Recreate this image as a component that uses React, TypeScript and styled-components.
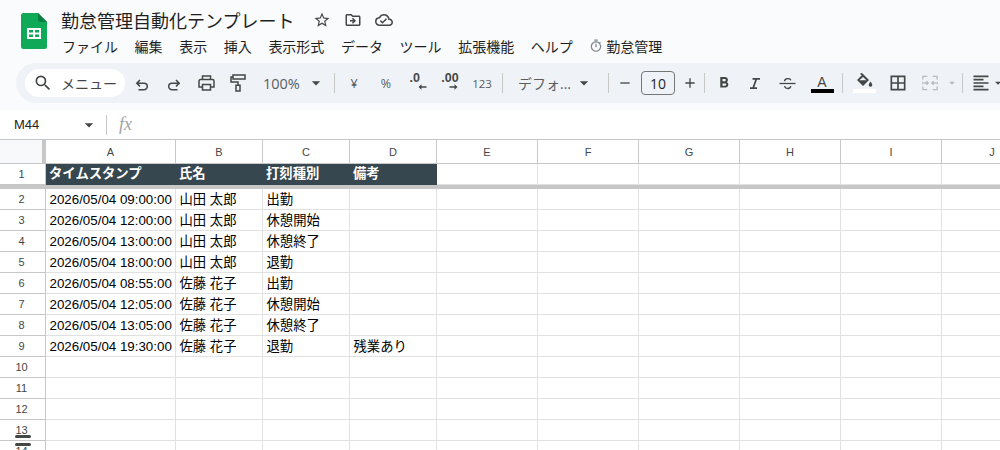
import React from 'react'
import styled, { createGlobalStyle } from 'styled-components'
import {
  MdStarBorder,
  MdOutlineDriveFileMove,
  MdOutlineCloudDone,
  MdFormatBold,
  MdBorderAll,
  MdFormatAlignLeft,
  MdSearch,
  MdArrowDropDown,
  MdRemove,
  MdAdd,
  MdOutlineTimer,
} from 'react-icons/md'

const CJK = `"Liberation Sans", "Noto Sans CJK JP", sans-serif`

const GlobalStyle = createGlobalStyle`
  html, body {
    margin: 0;
    padding: 0;
    width: 1000px;
    height: 450px;
    overflow: hidden;
    background: #fff;
  }
  * { box-sizing: border-box; }
`

const Page = styled.div`
  width: 1000px;
  height: 450px;
  overflow: hidden;
  position: relative;
  font-family: "Noto Sans CJK JP", sans-serif;
  color: #444746;
`

const TopArea = styled.div`
  height: 110px;
  background: #f9fbfd;
`

const TitleArea = styled.div`
  height: 63px;
  display: flex;
  padding-left: 21px;
`

const Logo = styled.svg`
  width: 26px;
  height: 36px;
  margin-top: 13px;
  flex: none;
`

const TitleColumn = styled.div`
  margin-left: 14px;
  display: flex;
  flex-direction: column;
`

const TitleRow = styled.div`
  height: 32px;
  padding-top: 7px;
  display: flex;
  align-items: center;
`

const DocTitle = styled.div`
  font-size: 18px;
  line-height: 26px;
  color: #1f1f1f;
  width: 245px;
`

const TitleIcon = styled.span`
  width: 31px;
  height: 24px;
  display: flex;
  align-items: center;
  justify-content: center;
  color: #444746;
  font-size: 18px;
  margin-top: 1px;
`

const MenuRow = styled.div`
  display: flex;
  align-items: center;
  gap: 16.6px;
  margin-left: 1px;
  height: 27px;
`

const MenuItem = styled.span`
  font-size: 14px;
  line-height: 20px;
  color: #1f1f1f;
  white-space: nowrap;
  display: flex;
  align-items: center;
  gap: 3px;
`

const Toolbar = styled.div`
  margin-left: 16px;
  width: 1000px;
  height: 40px;
  background: #eff3f8;
  border-radius: 20px 0 0 20px;
  padding-left: 9px;
  display: flex;
  align-items: center;
`

const SearchPill = styled.div`
  width: 100px;
  height: 28px;
  background: #fff;
  border-radius: 14px;
  display: flex;
  align-items: center;
  padding-left: 8px;
  flex: none;
  font-size: 14px;
  color: #444746;
  gap: 8px;
  margin-right: 1px;
  white-space: nowrap;
  svg { font-size: 20px; flex: none; }
`

const ToolButton = styled.div<{ $w?: number; $muted?: boolean }>`
  width: ${({ $w }) => $w ?? 32}px;
  height: 28px;
  flex: none;
  display: flex;
  align-items: center;
  justify-content: center;
  color: ${({ $muted }) => ($muted ? '#b8bbbf' : '#444746')};
  font-size: 20px;
  position: relative;
`

const ToolText = styled.span<{ $size?: number }>`
  font-family: "Open Sans", "Noto Sans CJK JP", sans-serif;
  font-size: ${({ $size }) => $size ?? 14}px;
  color: #5a5d5f;
  white-space: nowrap;
`

const Divider = styled.div<{ $ml?: number; $mr?: number }>`
  width: 1px;
  height: 20px;
  background: #c7c7c7;
  flex: none;
  margin-left: ${({ $ml }) => $ml ?? 0}px;
  margin-right: ${({ $mr }) => $mr ?? 0}px;
`

const ComboBlock = styled.div<{ $w: number }>`
  width: ${({ $w }) => $w}px;
  height: 28px;
  flex: none;
  display: flex;
  align-items: center;
  justify-content: space-between;
  padding-left: 9px;
  color: #444746;
  font-size: 20px;
`

const DecimalBox = styled.span`
  display: flex;
  flex-direction: column;
  align-items: flex-start;
  line-height: 10px;
  font-family: "Liberation Sans", sans-serif;
  font-weight: 700;
  font-size: 12.5px;
  color: #444746;
  margin-top: -3px;
  svg { display: block; margin-top: 1px; }
`

const SizeBox = styled.div`
  width: 34px;
  height: 24px;
  flex: none;
  border: 1px solid #747775;
  border-radius: 4px;
  display: flex;
  align-items: center;
  justify-content: center;
  font-family: "Open Sans", sans-serif;
  font-size: 14px;
  color: #1f1f1f;
`

const ColorStack = styled.div`
  display: flex;
  flex-direction: column;
  align-items: center;
  svg { display: block; }
`

const LetterA = styled.span`
  font-family: "Liberation Sans", sans-serif;
  font-size: 14px;
  line-height: 16px;
  color: #444746;
  transform: translateY(1px);
`

const ColorBar = styled.div<{ $color: string }>`
  width: 23px;
  height: 4px;
  background: ${({ $color }) => $color};
`

const FormulaBar = styled.div`
  height: 29px;
  background: #fff;
  display: flex;
  align-items: center;
  padding-left: 14px;
`

const NameBox = styled.div`
  width: 92px;
  display: flex;
  align-items: center;
  justify-content: space-between;
  padding-right: 7px;
  font-family: "Liberation Sans", sans-serif;
  font-size: 13px;
  color: #1f1f1f;
  svg { font-size: 20px; color: #444746; }
`

const FxMark = styled.span`
  font-family: "Liberation Serif", serif;
  font-style: italic;
  font-size: 18px;
  color: #a0a3a6;
  margin-left: 12px;
`

const SheetGrid = styled.div`
  display: grid;
  grid-template-columns: 46px 130px 87px 87px 87px 101px 101px 101px 101px 101px 101px;
  grid-template-rows: 24px 21px 4px repeat(13, 21px);
  border-top: 1px solid #c7c7c7;
  font-family: ${CJK};
`

const Corner = styled.div`
  background: #f8f9fa;
  border-right: 4px solid #c7c7c7;
  border-bottom: 1px solid #c7c7c7;
`

const ColHead = styled.div`
  border-right: 1px solid #c7c7c7;
  border-bottom: 1px solid #c7c7c7;
  display: flex;
  align-items: center;
  justify-content: center;
  font-size: 11px;
  color: #444746;
  padding-top: 1px;
`

const RowHead = styled.div`
  border-right: 1px solid #c7c7c7;
  border-bottom: 1px solid #c7c7c7;
  display: flex;
  align-items: center;
  justify-content: center;
  font-size: 11px;
  color: #444746;
  padding-right: 2px;
`

const Cell = styled.div<{ $head?: boolean }>`
  font-size: 13.33px;
  line-height: ${({ $head }) => ($head ? 20 : 22)}px;
  padding-left: ${({ $head }) => ($head ? 3 : 3.5)}px;
  padding-right: 1px;
  white-space: nowrap;
  overflow: hidden;
  color: ${({ $head }) => ($head ? '#fff' : '#000')};
  font-weight: ${({ $head }) => ($head ? 700 : 400)};
  background: ${({ $head }) => ($head ? '#37474f' : '#fff')};
  border-right: 1px solid ${({ $head }) => ($head ? '#37474f' : '#e1e1e1')};
  border-bottom: 1px solid ${({ $head }) => ($head ? '#37474f' : '#e1e1e1')};
`

const FreezeBar = styled.div`
  grid-column: 1 / -1;
  background: #c7c7c7;
`

const HiddenMark = styled.div<{ $top: number }>`
  position: absolute;
  left: 15px;
  top: ${({ $top }) => $top}px;
  width: 16px;
  height: 3px;
  border-radius: 2px;
  background: #444746;
`

const columns = ['A', 'B', 'C', 'D', 'E', 'F', 'G', 'H', 'I', 'J']

const rows = [
  ['2026/05/04 09:00:00', '山田 太郎', '出勤', ''],
  ['2026/05/04 12:00:00', '山田 太郎', '休憩開始', ''],
  ['2026/05/04 13:00:00', '山田 太郎', '休憩終了', ''],
  ['2026/05/04 18:00:00', '山田 太郎', '退勤', ''],
  ['2026/05/04 08:55:00', '佐藤 花子', '出勤', ''],
  ['2026/05/04 12:05:00', '佐藤 花子', '休憩開始', ''],
  ['2026/05/04 13:05:00', '佐藤 花子', '休憩終了', ''],
  ['2026/05/04 19:30:00', '佐藤 花子', '退勤', '残業あり'],
  ['', '', '', ''],
  ['', '', '', ''],
  ['', '', '', ''],
  ['', '', '', ''],
  ['', '', '', ''],
]

const headers = ['タイムスタンプ', '氏名', '打刻種別', '備考']

const menus = ['ファイル', '編集', '表示', '挿入', '表示形式', 'データ', 'ツール', '拡張機能', 'ヘルプ']

function SheetsLogo() {
  return (
    <Logo viewBox="0 0 26 36">
      <path d="M2.5 0H17l9 9v24.5a2.5 2.5 0 0 1-2.5 2.5h-21A2.5 2.5 0 0 1 0 33.500V2.500A2.500 2.500 0 0 1 2.500 0z" fill="#0fa958" />
      <path d="M17 0l9 9h-6.500A2.500 2.500 0 0 1 17 6.500z" fill="#0a7f43" />
      <path d="M6 15h14v11H6z M8 17v2.500h4V17z M14 17v2.500h4V17z M8 21.500V24h4v-2.500z M14 21.500V24h4v-2.500z" fill="#fff" fillRule="evenodd" />
    </Logo>
  )
}

function DecimalIcon({ label, dir }: { label: string; dir: 'left' | 'right' }) {
  return (
    <DecimalBox>
      {label}
      <svg width="9" height="6" viewBox="0 0 9 6" style={{ marginLeft: 8 }}>
        {dir === 'left' ? (
          <path d="M0.500 3L3.500 0.300V2.200H8.500V3.800H3.500V5.700z" fill="#444746" />
        ) : (
          <path d="M8.500 3L5.500 0.300V2.200H0.500V3.800H5.500V5.700z" fill="#444746" />
        )}
      </svg>
    </DecimalBox>
  )
}

function UndoIcon({ flip }: { flip?: boolean }) {
  return (
    <svg width="14" height="12" viewBox="0 0 14 12" fill="none" stroke="#444746" strokeWidth="1.500" style={{ transform: flip ? 'scaleX(-1)' : undefined, marginTop: 3 }}>
      <path d="M5 1L1.800 4.200L5 7.400M2 4.200H9a3.300 3.300 0 0 1 0 6.600H3.500" />
    </svg>
  )
}

function PrintIcon() {
  return (
    <svg width="17" height="16" viewBox="0 0 17 16" fill="none" stroke="#444746" strokeWidth="1.500">
      <path d="M4.500 4.500V1h8v3.500" />
      <path d="M4 12H1V6a1.500 1.500 0 0 1 1.500-1.500h12A1.500 1.500 0 0 1 16 6v6h-3" />
      <path d="M4.500 9.500h8V15h-8z" />
    </svg>
  )
}

function PaintIcon() {
  return (
    <svg width="16" height="18" viewBox="0 0 16 18" fill="none" stroke="#444746" strokeWidth="1.500">
      <path d="M3 1h12v4H3z" />
      <path d="M3 3H1V8H8V11" />
      <path d="M6 11.200h4v5.800H6z" />
    </svg>
  )
}

function ItalicIcon() {
  return (
    <svg width="10" height="11" viewBox="0 0 10 11">
      <path d="M2.500 0H10v1.800H7L4.300 9.200H7V11H0V9.200H2.500L5.200 1.800H2.500z" fill="#444746" />
    </svg>
  )
}

function StrikeIcon() {
  return (
    <svg width="17" height="13" viewBox="0 0 17 13" fill="none" stroke="#444746" strokeWidth="1.300">
      <path d="M0.500 6.500H16.500" />
      <path d="M5.500 4.300C5.500 1.200 11.500 0.600 11.700 3.400" />
      <path d="M5.600 9C6 12.300 11.700 12.300 11.700 9" />
    </svg>
  )
}

function FillIcon() {
  return (
    <svg width="17" height="15" viewBox="0 0 17 15" style={{ marginBottom: 1 }}>
      <path d="M4.500 0.500L6 0L8 2L13 7L7 13L1 7L5.800 2.300L4 0.900z" fill="#444746" />
      <path d="M7 4L10.500 7.200H3.300z" fill="#eff3f8" />
      <path d="M14.500 8.500C15.500 10 16.300 11 16.300 12A1.800 1.800 0 0 1 12.700 12C12.700 11 13.500 10 14.500 8.500z" fill="#444746" />
    </svg>
  )
}

function MergeIcon() {
  return (
    <svg width="16" height="16" viewBox="0 0 18 18" fill="none" stroke="#b8bbbf" strokeWidth="1.500">
      <path d="M1 5V1.500h5M12 1.500h5V5M1 13v3.500h5M12 16.500h5V13M1 7.500v3M17 7.500v3" />
      <path d="M2.500 9H7M5 7l2 2-2 2M15.500 9H11M13 7l-2 2 2 2" />
    </svg>
  )
}

export default function App() {
  return (
    <Page>
      <GlobalStyle />
      <TopArea>
        <TitleArea>
          <SheetsLogo />
          <TitleColumn>
            <TitleRow>
              <DocTitle>勤怠管理自動化テンプレート</DocTitle>
              <TitleIcon><MdStarBorder /></TitleIcon>
              <TitleIcon><MdOutlineDriveFileMove /></TitleIcon>
              <TitleIcon><MdOutlineCloudDone /></TitleIcon>
            </TitleRow>
            <MenuRow>
              {menus.map((m) => (
                <MenuItem key={m}>{m}</MenuItem>
              ))}
              <MenuItem>
                <MdOutlineTimer size={14} color="#80868b" />
                勤怠管理
              </MenuItem>
            </MenuRow>
          </TitleColumn>
        </TitleArea>

        <Toolbar>
          <SearchPill>
            <MdSearch />
            メニュー
          </SearchPill>
          <ToolButton><UndoIcon /></ToolButton>
          <ToolButton><UndoIcon flip /></ToolButton>
          <ToolButton><PrintIcon /></ToolButton>
          <ToolButton><PaintIcon /></ToolButton>
          <ComboBlock $w={72}>
            <ToolText $size={14.5}>100%</ToolText>
            <MdArrowDropDown />
          </ComboBlock>
          <Divider $ml={8} $mr={3} />
          <ToolButton $w={32}><ToolText $size={12.5}>¥</ToolText></ToolButton>
          <ToolButton $w={32}><ToolText $size={12.5}>%</ToolText></ToolButton>
          <ToolButton $w={32}><DecimalIcon label=".0" dir="left" /></ToolButton>
          <ToolButton $w={32}><DecimalIcon label=".00" dir="right" /></ToolButton>
          <ToolButton $w={32}><ToolText $size={11.5}>123</ToolText></ToolButton>
          <Divider $ml={4} $mr={6} />
          <ComboBlock $w={91}>
            <ToolText>デフォ...</ToolText>
            <MdArrowDropDown style={{ marginRight: 6 }} />
          </ComboBlock>
          <Divider $ml={8} />
          <ToolButton $w={32}><MdRemove size={16} /></ToolButton>
          <SizeBox>10</SizeBox>
          <ToolButton $w={29}><MdAdd size={16} /></ToolButton>
          <Divider />
          <ToolButton $w={38}><MdFormatBold size={18} /></ToolButton>
          <ToolButton $w={24}><ItalicIcon /></ToolButton>
          <ToolButton $w={41}><StrikeIcon /></ToolButton>
          <ToolButton $w={28}>
            <ColorStack>
              <LetterA>A</LetterA>
              <ColorBar $color="#000" />
            </ColorStack>
          </ToolButton>
          <Divider $ml={6} $mr={5} />
          <ToolButton $w={33}>
            <ColorStack>
              <FillIcon />
              <ColorBar $color="#fff" />
            </ColorStack>
          </ToolButton>
          <ToolButton $w={34}><MdBorderAll /></ToolButton>
          <ToolButton $w={30}><MergeIcon /></ToolButton>
          <ToolButton $w={14} $muted><MdArrowDropDown /></ToolButton>
          <Divider $ml={3} $mr={8} />
          <ToolButton $w={20}><MdFormatAlignLeft /></ToolButton>
          <ToolButton $w={14}><MdArrowDropDown /></ToolButton>
        </Toolbar>
      </TopArea>

      <FormulaBar>
        <NameBox>
          M44
          <MdArrowDropDown />
        </NameBox>
        <Divider />
        <FxMark>fx</FxMark>
      </FormulaBar>

      <SheetGrid>
        <Corner />
        {columns.map((c) => (
          <ColHead key={c}>{c}</ColHead>
        ))}

        <RowHead>1</RowHead>
        {columns.map((c, i) =>
          i < 4 ? <Cell key={c} $head>{headers[i]}</Cell> : <Cell key={c} />,
        )}

        <FreezeBar />

        {rows.map((row, r) => (
          <React.Fragment key={r}>
            <RowHead>{r + 2}</RowHead>
            {columns.map((c, i) => (
              <Cell key={c}>{row[i] ?? ''}</Cell>
            ))}
          </React.Fragment>
        ))}
      </SheetGrid>

      <HiddenMark $top={435} />
      <HiddenMark $top={443} />
    </Page>
  )
}
